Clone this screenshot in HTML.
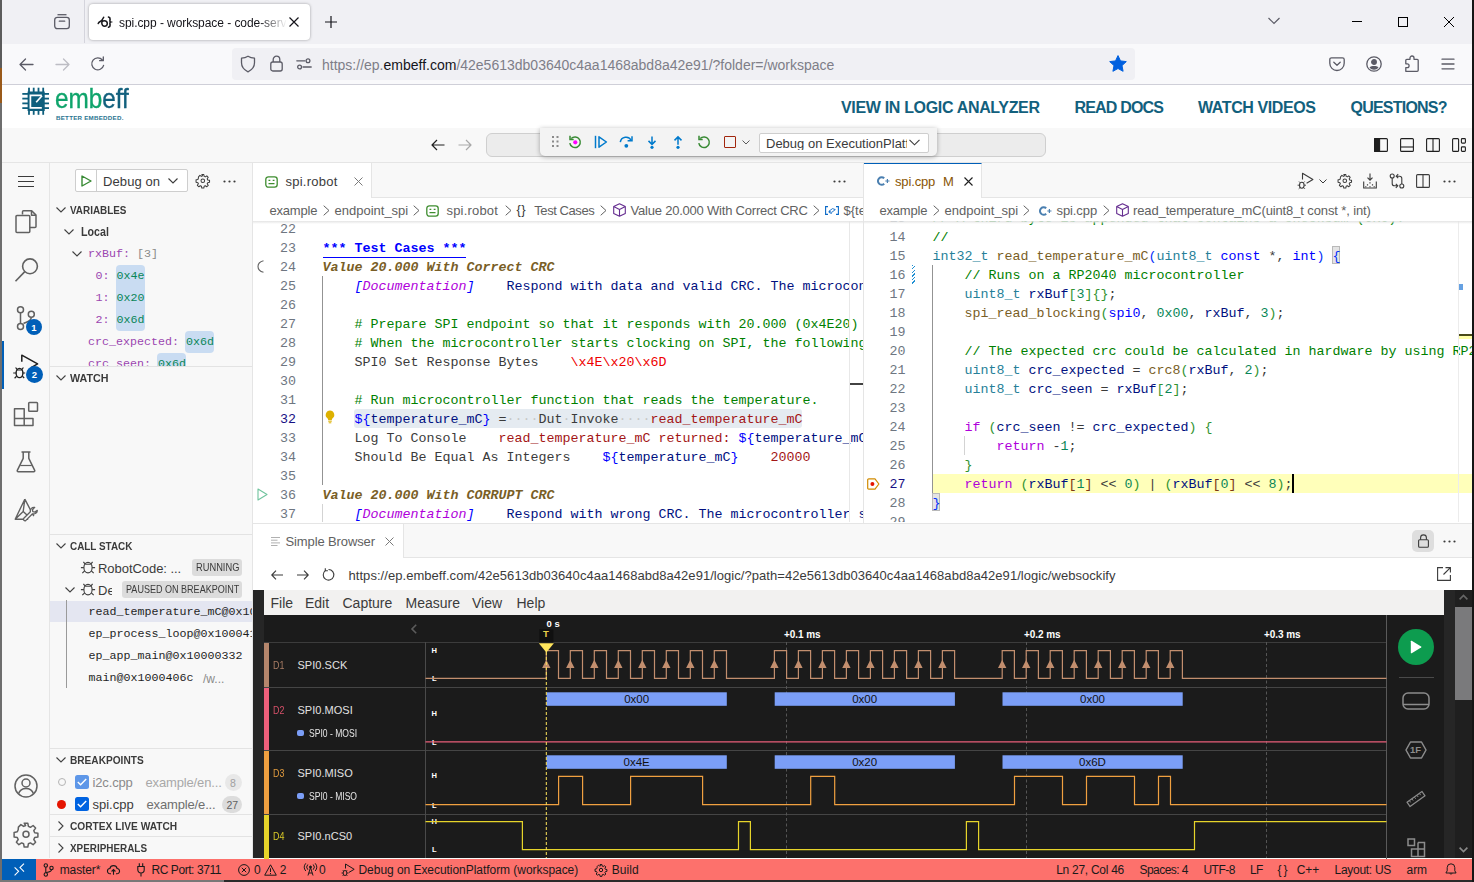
<!DOCTYPE html>
<html><head><meta charset="utf-8">
<style>
*{box-sizing:border-box;margin:0;padding:0}
html,body{width:1474px;height:882px;overflow:hidden;background:#f8f8f8;font-family:"Liberation Sans",sans-serif;font-size:13px;color:#3b3b3b}
.abs{position:absolute}
#root{position:relative;width:1474px;height:882px;overflow:hidden}
svg{display:block;overflow:visible}
.t{position:absolute;white-space:nowrap;line-height:1}
/* firefox */
#fx-tabs{left:0;top:0;width:1474px;height:44px;background:#f0f0f4}
#fx-nav{left:0;top:44px;width:1474px;height:41px;background:#f9f9fb;border-bottom:1px solid #cfcfd8}
#fx-tab{left:89px;top:4px;width:221px;height:36px;background:#fff;border-radius:4px;box-shadow:0 0 3px rgba(0,0,0,.35)}
#fx-url{left:232px;top:48px;width:903px;height:32px;background:#f0f0f4;border-radius:4px}
/* embeff header */
#hdr{left:0;top:85px;width:1474px;height:43px;background:#fff}
.hl{position:absolute;top:99.500px;font-weight:bold;font-size:16px;color:#12607d;white-space:nowrap;line-height:1;letter-spacing:-0.2px}
/* vscode */
#vs-title{left:0;top:128px;width:1474px;height:35px;background:#f8f8f8;border-bottom:1px solid #e5e5e5}
#act{left:0;top:163px;width:50px;height:695px;background:#f8f8f8;border-right:1px solid #e5e5e5}
#side{left:50px;top:163px;width:203px;height:695px;background:#f8f8f8;border-right:1px solid #e5e5e5}
#ed1{left:253px;top:163px;width:610px;height:360px;background:#fff;overflow:hidden}
#ed2{left:863px;top:163px;width:611px;height:360px;background:#fff;overflow:hidden;border-left:1px solid #e5e5e5}
#ed3{left:253px;top:523px;width:1221px;height:335px;background:#fff;overflow:hidden;border-top:1px solid #e5e5e5}
#status{left:0;top:859px;width:1472px;height:21px;background:#fd716c;color:#111;font-size:12px}
.tabbar{position:absolute;left:0;top:0;width:100%;height:35px;background:#f8f8f8;border-bottom:1px solid #e5e5e5}
.code{position:absolute;font-family:"Liberation Mono",monospace;font-size:13.33px;line-height:19px;white-space:pre;color:#3b3b3b}
.ln{position:absolute;font-family:"Liberation Mono",monospace;font-size:13.33px;line-height:19px;white-space:pre;color:#6e7681;text-align:right}

.sh{position:absolute;left:70px;font-weight:bold;font-size:11px;color:#3b3b3b;white-space:nowrap;line-height:1;transform-origin:0 50%;transform:scaleX(.9)}
.chev{position:absolute}
.sm{position:absolute;font-family:"Liberation Mono",monospace;font-size:11.670px;white-space:pre;line-height:1;color:#1f1f1f}
.hb{position:absolute;background:#c9dcf2;border-radius:4px}
.sep{position:absolute;left:50px;width:202px;height:1px;background:#e3e3e3}
.bdg{position:absolute;background:#dcdcdc;border-radius:3px;font-size:10.500px;color:#3b3b3b;line-height:1;white-space:nowrap}
</style></head><body><div id="root">

<!-- FIREFOX TABS -->
<div id="fx-tabs" class="abs"></div>
<div class="abs" style="left:84px;top:0;width:1px;height:43px;background:#d4d4dc"></div>
<div id="fx-tab" class="abs"></div>
<!-- firefox view icon -->
<svg class="abs" style="left:53px;top:13px" width="18" height="18" viewBox="0 0 18 18" fill="none" stroke="#5b5b66" stroke-width="1.3"><path d="M4.5 1.7h9"/><rect x="1.7" y="4.3" width="14.6" height="11.4" rx="2.6"/><path d="M6.3 8.2h5.4" stroke-linecap="round"/></svg>
<!-- favicon -->
<svg class="abs" style="left:97px;top:16px" width="16" height="12" viewBox="0 0 16 12" fill="none" stroke="#1a1a1e" stroke-width="1.500" stroke-linecap="round"><path d="M1.200 7.600C2 5.400 3.600 5.800 4.600 4.600"/><path d="M6.700 1.200C5.200 2.800 4.600 5 4.800 7.200c.2 1.900 1.300 3 2.800 3 1.600 0 2.700-1 2.700-2.600 0-1.700-1.300-2.800-3-2.800-.9 0-1.700.4-2.300 1"/><path d="M11.500 1c1.200.3 1.700 1 1.600 2.200l-.2 1.400c-.1.800.1 1.300.7 1.500-.6.200-.8.700-.7 1.500l.2 1.400c.1 1.200-.4 1.900-1.600 2.200" stroke-width="1.600"/></svg>
<div class="t" style="left:119px;top:17.300px;font-size:12px;letter-spacing:-.06px;color:#15141a;width:168px;overflow:hidden;-webkit-mask-image:linear-gradient(90deg,#000 84%,transparent 100%)">spi.cpp - workspace - code-server</div>
<svg class="abs" style="left:289px;top:17px" width="10" height="10" viewBox="0 0 10 10" stroke="#15141a" stroke-width="1.2"><path d="M.5.5l9 9M9.500.5l-9 9"/></svg>
<svg class="abs" style="left:325px;top:16px" width="12" height="12" viewBox="0 0 12 12" stroke="#15141a" stroke-width="1.2"><path d="M6 0v12M0 6h12"/></svg>
<!-- window controls -->
<svg class="abs" style="left:1268px;top:17px" width="12" height="8" viewBox="0 0 12 8" fill="none" stroke="#5b5b66" stroke-width="1.200"><path d="M.5 1l5.500 5.500L11.500 1"/></svg>
<div class="abs" style="left:1352px;top:21px;width:10px;height:1px;background:#000"></div>
<div class="abs" style="left:1398px;top:17px;width:10px;height:10px;border:1px solid #000"></div>
<svg class="abs" style="left:1444px;top:17px" width="10" height="10" viewBox="0 0 10 10" stroke="#000" stroke-width="1"><path d="M0 0l10 10M10 0L0 10"/></svg>
<!-- FIREFOX NAV -->
<div id="fx-nav" class="abs"></div>
<div id="fx-url" class="abs"></div>
<svg class="abs" style="left:19px;top:58px" width="15" height="13" viewBox="0 0 15 13" fill="none" stroke="#5b5b66" stroke-width="1.300" stroke-linecap="round" stroke-linejoin="round"><path d="M14 6.500H1M6.500 1 1 6.500 6.500 12"/></svg>
<svg class="abs" style="left:55px;top:58px" width="15" height="13" viewBox="0 0 15 13" fill="none" stroke="#bdbdc4" stroke-width="1.300" stroke-linecap="round" stroke-linejoin="round"><path d="M1 6.500h13M8.500 1 14 6.500 8.500 12"/></svg>
<svg class="abs" style="left:90px;top:56px" width="16" height="16" viewBox="0 0 16 16" fill="none" stroke="#5b5b66" stroke-width="1.300" stroke-linecap="round" stroke-linejoin="round"><path d="M13.600 9.300A6 6 0 1 1 12.400 4"/><path d="M13.300 1v3.700H9.600"/></svg>
<svg class="abs" style="left:240px;top:55px" width="16" height="18" viewBox="0 0 16 18" fill="none" stroke="#5b5b66" stroke-width="1.300" stroke-linejoin="round"><path d="M8 1.200c-2 1.300-4.200 1.900-6.500 2v4.600c0 4.300 2.800 7.200 6.500 9 3.700-1.800 6.500-4.700 6.500-9V3.200c-2.300-.1-4.500-.7-6.500-2z"/></svg>
<svg class="abs" style="left:270px;top:55px" width="13" height="17" viewBox="0 0 13 17" fill="none" stroke="#5b5b66" stroke-width="1.300"><rect x=".8" y="7" width="11.400" height="9" rx="2"/><path d="M3.200 7V4.500a3.300 3.300 0 0 1 6.600 0V7"/></svg>
<svg class="abs" style="left:296px;top:58px" width="16" height="12" viewBox="0 0 16 12" fill="none" stroke="#5b5b66" stroke-width="1.300" stroke-linecap="round"><circle cx="12" cy="2.800" r="1.900"/><path d="M.8 2.800h8"/><circle cx="3.600" cy="9" r="1.900"/><path d="M7 9h8.200"/></svg>
<div class="t" style="left:322px;top:58px;font-size:14px;color:#7e7e88">https://ep.<span style="color:#15141a">embeff.com</span>/42e5613db03640c4aa1468abd8a42e91/?folder=/workspace</div>
<svg class="abs" style="left:1109px;top:55px" width="18" height="17" viewBox="0 0 18 17" fill="#0060df"><path d="M9 .6l2.500 5.300 5.800.7-4.300 4 1.100 5.700L9 13.500l-5.100 2.800L5 10.600.7 6.600l5.800-.7z" stroke="#0060df" stroke-width="1" stroke-linejoin="round"/></svg>
<svg class="abs" style="left:1329px;top:57px" width="16" height="14" viewBox="0 0 16 14" fill="none" stroke="#5b5b66" stroke-width="1.300" stroke-linecap="round" stroke-linejoin="round"><path d="M2.500.8h11a1.700 1.700 0 0 1 1.700 1.700v3.800a7.200 7.200 0 0 1-14.400 0V2.500A1.700 1.700 0 0 1 2.500.8z"/><path d="M4.800 5.200 8 8.200l3.200-3"/></svg>
<svg class="abs" style="left:1366px;top:56px" width="16" height="16" viewBox="0 0 16 16" fill="none" stroke="#5b5b66" stroke-width="1.300"><circle cx="8" cy="8" r="7.200"/><circle cx="8" cy="6" r="2.300" fill="#5b5b66"/><path d="M3.500 11.200c1.200 1.800 2.800 2.500 4.500 2.500s3.300-.7 4.500-2.500c-1-.9-2.600-1.300-4.500-1.300s-3.500.4-4.500 1.300z" fill="#5b5b66" stroke="none"/></svg>
<svg class="abs" style="left:1404px;top:55px" width="16" height="17" viewBox="0 0 16 17" fill="none" stroke="#5b5b66" stroke-width="1.300" stroke-linejoin="round"><path d="M6 4.300V3a2 2 0 0 1 4 0v1.300h3.200a1 1 0 0 1 1 1v10a1 1 0 0 1-1 1H1.800V12.600h1.400a1.900 1.900 0 0 0 0-3.800H1.800V5.300a1 1 0 0 1 1-1z"/></svg>
<svg class="abs" style="left:1441px;top:58px" width="14" height="12" viewBox="0 0 14 12" stroke="#5b5b66" stroke-width="1.300" stroke-linecap="round"><path d="M1 1.200h12M1 6h12M1 10.800h12"/></svg>
<!-- EMBEFF HEADER -->
<div id="hdr" class="abs"></div>
<svg class="abs" style="left:22px;top:87px" width="28" height="28" viewBox="0 0 28 28"><g fill="#0f5f7d"><rect x="5.600" y="4.500" width="17.100" height="19.500"/><rect x="6.100" y=".7" width="1.800" height="27.100"/><rect x="10.800" y=".7" width="1.800" height="27.100"/><rect x="15.600" y=".7" width="1.800" height="27.100"/><rect x="20.300" y=".7" width="1.800" height="27.100"/><rect x=".3" y="6" width="26.700" height="1.800"/><rect x=".3" y="10.700" width="26.700" height="1.800"/><rect x=".3" y="15.500" width="26.700" height="1.800"/><rect x=".3" y="20.200" width="26.700" height="1.800"/></g><path d="M19.800 8.400H8.400v12.400h11.400" fill="none" stroke="#fff" stroke-width="1.700"/><path d="M20 8.800l-5.800 6.400" stroke="#fff" stroke-width="1.700"/></svg>
<div id="logo-t" class="t" style="left:54.500px;top:86px;font-size:27px;color:#12607d;-webkit-text-stroke:.35px currentColor;transform-origin:0 0;transform:scaleX(.9);letter-spacing:0px"><span style="color:#0fa46b">emb</span>eff</div>
<div id="logo-s" class="t" style="left:56px;top:115.300px;font-size:6.200px;font-weight:bold;color:#2b7591;letter-spacing:.25px">BETTER EMBEDDED.</div>
<div id="h1" class="hl" style="left:841px;letter-spacing:-.33px">VIEW IN LOGIC ANALYZER</div>
<div id="h2" class="hl" style="left:1074.500px;letter-spacing:-.81px">READ DOCS</div>
<div id="h3" class="hl" style="left:1198px;letter-spacing:-.41px">WATCH VIDEOS</div>
<div id="h4" class="hl" style="left:1350.500px;letter-spacing:-.78px">QUESTIONS?</div>
<!-- VSCODE TITLE -->
<div id="vs-title" class="abs"></div>
<svg class="abs" style="left:431px;top:139px" width="14" height="12" viewBox="0 0 14 12" fill="none" stroke="#1f1f1f" stroke-width="1.200" stroke-linejoin="round"><path d="M13.500 6H1M6 1 1 6l5 5"/></svg>
<svg class="abs" style="left:458px;top:139px" width="14" height="12" viewBox="0 0 14 12" fill="none" stroke="#a8a8a8" stroke-width="1.200" stroke-linejoin="round"><path d="M.5 6H13M8 1l5 5-5 5"/></svg>
<div class="abs" style="left:486px;top:133px;width:560px;height:24px;background:#ececec;border:1px solid #cfcfcf;border-radius:6px"></div>
<!-- debug toolbar -->
<div class="abs" style="left:540px;top:128px;width:397px;height:28px;background:#f3f3f3;border-radius:0 0 5px 5px;box-shadow:0 1px 5px rgba(0,0,0,.32)"></div>
<svg class="abs" style="left:552px;top:136px" width="7" height="12" viewBox="0 0 7 12" fill="#8a8a8a"><rect x="0" y="0" width="2" height="2"/><rect x="4.500" y="0" width="2" height="2"/><rect x="0" y="4.500" width="2" height="2"/><rect x="4.500" y="4.500" width="2" height="2"/><rect x="0" y="9" width="2" height="2"/><rect x="4.500" y="9" width="2" height="2"/></svg>
<svg class="abs" style="left:568px;top:135px" width="14" height="14" viewBox="0 0 14 14" fill="none" stroke="#388a34" stroke-width="1.500"><path d="M3.200 3.600A5.300 5.300 0 1 1 1.800 8.200"/><path d="M2 .8v3.600h3.700" stroke-linejoin="miter"/><circle cx="7.300" cy="7.300" r="2.100" fill="#f0f" stroke="none"/></svg>
<svg class="abs" style="left:594px;top:135px" width="14" height="14" viewBox="0 0 14 14" fill="none" stroke="#007acc" stroke-width="1.500"><path d="M1.500 .8v12.400"/><path d="M5 1.800v10.400L12.400 7z" stroke-linejoin="round"/></svg>
<svg class="abs" style="left:619px;top:135px" width="15" height="14" viewBox="0 0 15 14" fill="none" stroke="#007acc" stroke-width="1.500"><path d="M1.300 7.200a5.800 5.800 0 0 1 11-1.700"/><path d="M13 1.300v4.500H8.600"/><circle cx="7.300" cy="10.800" r="1.900" fill="#007acc" stroke="none"/></svg>
<svg class="abs" style="left:647px;top:135.500px" width="10" height="13.400" viewBox="0 0 12 16" fill="none" stroke="#007acc" stroke-width="1.800"><path d="M6 .5v9.300M1.800 5.800 6 10l4.200-4.200"/><circle cx="6" cy="13.600" r="1.900" fill="#007acc" stroke="none"/></svg>
<svg class="abs" style="left:673px;top:135.500px" width="10" height="13.400" viewBox="0 0 12 16" fill="none" stroke="#007acc" stroke-width="1.800"><path d="M6 10.500V1.200M1.800 5.200 6 1l4.200 4.200"/><circle cx="6" cy="13.600" r="1.900" fill="#007acc" stroke="none"/></svg>
<svg class="abs" style="left:697px;top:135px" width="14" height="14" viewBox="0 0 14 14" fill="none" stroke="#388a34" stroke-width="1.500"><path d="M3.200 3.600A5.300 5.300 0 1 1 1.800 8.200"/><path d="M2 .8v3.600h3.700"/></svg>
<div class="abs" style="left:724px;top:136px;width:12px;height:12px;border:1.500px solid #a1260d;border-radius:1px"></div>
<svg class="abs" style="left:742px;top:140px" width="8" height="5" viewBox="0 0 8 5" fill="none" stroke="#5a5a5a" stroke-width="1"><path d="M.5.5 4 4 7.500.5"/></svg>
<div class="abs" style="left:759px;top:133px;width:170px;height:20px;background:#fff;border:1px solid #cecece;border-radius:2px"></div>
<div id="dbgsel" class="t" style="left:766px;top:136.500px;font-size:13px;color:#3b3b3b;width:141px;overflow:hidden;letter-spacing:0px">Debug on ExecutionPlatform (workspace)</div>
<svg class="abs" style="left:909px;top:139px" width="11" height="7" viewBox="0 0 11 7" fill="none" stroke="#3b3b3b" stroke-width="1.100"><path d="M.5.800 5.500 5.800 10.500.8"/></svg>
<!-- layout icons -->
<svg class="abs" style="left:1374px;top:138px" width="14" height="14" viewBox="0 0 14 14" fill="none" stroke="#1f1f1f" stroke-width="1.100"><rect x=".6" y=".6" width="12.800" height="12.800" rx="1"/><rect x=".6" y=".6" width="5" height="12.800" fill="#1f1f1f"/></svg>
<svg class="abs" style="left:1400px;top:138px" width="14" height="14" viewBox="0 0 14 14" fill="none" stroke="#1f1f1f" stroke-width="1.100"><rect x=".6" y=".6" width="12.800" height="12.800" rx="1"/><path d="M.6 9h12.800"/></svg>
<svg class="abs" style="left:1426px;top:138px" width="14" height="14" viewBox="0 0 14 14" fill="none" stroke="#1f1f1f" stroke-width="1.100"><rect x=".6" y=".6" width="12.800" height="12.800" rx="1"/><path d="M7 .6v12.800"/></svg>
<svg class="abs" style="left:1452px;top:138px" width="14" height="14" viewBox="0 0 14 14" fill="none" stroke="#1f1f1f" stroke-width="1.100"><rect x=".6" y=".6" width="6" height="12.800" rx="1"/><rect x="9.400" y=".6" width="4" height="4.500" rx=".8"/><rect x="9.400" y="8.900" width="4" height="4.500" rx=".8"/></svg>
<!-- ACTIVITY BAR -->
<div id="act" class="abs"></div>
<div class="abs" style="left:2px;top:341px;width:2px;height:48px;background:#005fb8"></div>
<svg class="abs" style="left:18px;top:176px" width="16" height="11" viewBox="0 0 16 11" stroke="#3b3b3b" stroke-width="1"><path d="M0 .5h16M0 5.500h16M0 10.500h16"/></svg>
<!-- files -->
<svg class="abs" style="left:14px;top:209px" width="24" height="26" viewBox="0 0 24 26" fill="none" stroke="#616161" stroke-width="1.500" stroke-linejoin="round"><path d="M8.500 5.500V2.800a1 1 0 0 1 1-1h8.200l4.300 4.300v11.400a1 1 0 0 1-1 1h-5.200"/><path d="M17.500 2v4.300H22"/><path d="M15.800 8.300v14.200a1 1 0 0 1-1 1H3a1 1 0 0 1-1-1V7.500a1 1 0 0 1 1-1h11.800a1 1 0 0 1 1 1z"/></svg>
<!-- search -->
<svg class="abs" style="left:14px;top:257px" width="25" height="26" viewBox="0 0 25 26" fill="none" stroke="#616161" stroke-width="1.600"><circle cx="16" cy="9.300" r="7.400"/><path d="M10.800 14.600 1.500 24.300"/></svg>
<!-- scm -->
<svg class="abs" style="left:15px;top:305px" width="22" height="27" viewBox="0 0 22 27" fill="none" stroke="#616161" stroke-width="1.500"><circle cx="5.500" cy="4.800" r="3"/><circle cx="5.500" cy="21.500" r="3"/><circle cx="16.300" cy="9.300" r="3"/><path d="M5.500 7.800v10.700"/><path d="M16.300 12.300c0 4-4 4.500-7.800 6.200"/></svg>
<div class="abs" style="left:25.500px;top:318.500px;width:16.500px;height:16.500px;border-radius:9px;background:#005fb8"></div>
<div class="t" style="left:31.300px;top:322.500px;font-size:9.500px;font-weight:bold;color:#fff">1</div>
<!-- debug -->
<svg class="abs" style="left:12px;top:353px" width="28" height="28" viewBox="0 0 28 28" fill="none" stroke="#1f1f1f" stroke-width="1.500" stroke-linejoin="round"><path d="M9.800 8.800V2.200l15.800 8.600-6.500 3.800"/><ellipse cx="7.500" cy="20" rx="3.400" ry="4.600" stroke-width="1.400"/><path d="M5 16.300 3.600 14.500M10 16.300l1.400-1.800M4.100 20H1.200M10.900 20h2.300M4.600 23.300l-2 1.900M10.400 23.300l1.800 1.700M5 17h5" stroke-width="1.200"/></svg>
<div class="abs" style="left:26.300px;top:366.300px;width:16.500px;height:16.500px;border-radius:9px;background:#005fb8"></div>
<div class="t" style="left:31.800px;top:370.300px;font-size:9.500px;font-weight:bold;color:#fff">2</div>
<!-- extensions -->
<svg class="abs" style="left:13px;top:401px" width="26" height="26" viewBox="0 0 26 26" fill="none" stroke="#616161" stroke-width="1.500" stroke-linejoin="round"><path d="M1.500 7.800h9.700v9.600H1.500zM11.200 17.400h8.800v7.200h-8.800zM1.500 17.400v7.200h9.700"/><rect x="15.700" y="1.500" width="8.800" height="8.800" rx=".8"/></svg>
<!-- flask -->
<svg class="abs" style="left:16px;top:451px" width="20" height="22" viewBox="0 0 20 22" fill="none" stroke="#616161" stroke-width="1.500" stroke-linejoin="round"><path d="M5.500 1h9"/><path d="M7.200 1v6.300L1.300 19.400a1 1 0 0 0 .9 1.400h15.600a1 1 0 0 0 .9-1.400L12.800 7.300V1"/><path d="M4.200 14.500h11.600" stroke-width="1.200"/></svg>
<!-- cmake -->
<svg class="abs" style="left:14px;top:498px" width="25" height="25" viewBox="0 0 25 25" fill="none" stroke="#616161" stroke-width="1.400" stroke-linejoin="round"><path d="M10.800 1.200 1.200 21.200h13M10.800 1.200l9 17M10.800 1.200l-1.600 12.300 4.600 4.200M1.200 21.200l8-7.700"/><path d="M23.300 12.400a3.600 3.600 0 0 1-4.800 3.400l-6.600 6.600a1.500 1.500 0 0 1-2.100-2.100l6.600-6.600a3.600 3.600 0 0 1 4.300-4.300l-2.300 2.300.4 2 2 .4z" stroke-width="1.300" fill="#f8f8f8"/></svg>
<!-- account -->
<svg class="abs" style="left:14px;top:774px" width="24" height="24" viewBox="0 0 24 24" fill="none" stroke="#616161" stroke-width="1.500"><circle cx="12" cy="12" r="11"/><circle cx="12" cy="9" r="4"/><path d="M4.500 19.800c1.200-3.600 4-5.300 7.500-5.300s6.300 1.700 7.500 5.300"/></svg>
<!-- gear -->
<svg class="abs" style="left:14px;top:822px" width="24" height="24" viewBox="0 0 24 24" fill="none" stroke="#616161" stroke-width="1.500" stroke-linejoin="round"><path d="M10.200 1h3.600l.6 3.200 2 .9 2.700-1.800 2.500 2.500-1.800 2.700.9 2 3.200.6v3.600l-3.200.6-.9 2 1.800 2.700-2.500 2.500-2.700-1.800-2 .9-.6 3.200h-3.600l-.6-3.200-2-.9-2.700 1.800-2.500-2.500 1.800-2.700-.9-2-3.200-.6V10.200l3.200-.6.900-2L4.400 4.900l2.500-2.500 2.700 1.800 2-.9z" transform="translate(0 .2)"/><circle cx="12" cy="12.200" r="3"/></svg>
<!-- SIDEBAR -->
<div id="side" class="abs"></div>
<div class="abs" style="left:75px;top:169px;width:113px;height:23px;background:#fff;border:1px solid #cecece;border-radius:2px"></div>
<div class="abs" style="left:96px;top:170px;width:1px;height:21px;background:#cecece"></div>
<svg class="abs" style="left:81px;top:175px" width="11" height="12" viewBox="0 0 11 12" fill="none" stroke="#388a34" stroke-width="1.400" stroke-linejoin="round"><path d="M1 1v10l9-5z"/></svg>
<div id="dbgon" class="t" style="left:103px;top:174.500px;font-size:13px;color:#3b3b3b;letter-spacing:.1px">Debug on</div>
<svg class="abs" style="left:168px;top:178px" width="10" height="6" viewBox="0 0 10 6" fill="none" stroke="#3b3b3b" stroke-width="1.100"><path d="M.5.5 5 5 9.500.5"/></svg>
<svg class="abs" style="left:195.800px;top:174.300px" width="13.600" height="13.600" viewBox="0 0 24 24" fill="none" stroke="#3b3b3b" stroke-width="1.800" stroke-linejoin="round"><path d="M10.200 1h3.600l.6 3.200 2 .9 2.700-1.800 2.500 2.500-1.800 2.700.9 2 3.200.6v3.600l-3.200.6-.9 2 1.800 2.700-2.500 2.500-2.700-1.800-2 .9-.6 3.200h-3.600l-.6-3.200-2-.9-2.700 1.800-2.500-2.500 1.800-2.700-.9-2-3.200-.6V10.200l3.200-.6.900-2L4.400 4.900l2.500-2.500 2.700 1.800 2-.9z"/><circle cx="12" cy="12" r="3.200"/></svg>
<svg class="abs" style="left:223px;top:180px" width="13" height="3" viewBox="0 0 13 3" fill="#3b3b3b"><circle cx="1.500" cy="1.500" r="1.100"/><circle cx="6.500" cy="1.500" r="1.100"/><circle cx="11.500" cy="1.500" r="1.100"/></svg>
<svg class="chev" style="left:55.5px;top:206.5px" width="10" height="6" viewBox="0 0 10 6" fill="none" stroke="#424242" stroke-width="1.100"><path d="M.5.5 5 5 9.500.5"/></svg>
<div id="sh-var" class="sh" style="top:204.500px">VARIABLES</div>
<svg class="chev" style="left:64px;top:229px" width="10" height="6" viewBox="0 0 10 6" fill="none" stroke="#424242" stroke-width="1.100"><path d="M.5.5 5 5 9.500.5"/></svg>
<div id="local" class="t" style="left:80.500px;top:224.800px;font-size:13px;font-weight:bold;color:#3b3b3b;transform-origin:0 50%;transform:scaleX(.82)">Local</div>
<svg class="chev" style="left:72px;top:251px" width="10" height="6" viewBox="0 0 10 6" fill="none" stroke="#424242" stroke-width="1.100"><path d="M.5.5 5 5 9.500.5"/></svg>
<div class="hb" style="left:115.500px;top:264.500px;width:29px;height:66px"></div>
<div class="hb" style="left:184.500px;top:330.500px;width:29px;height:22px"></div>
<div class="hb" style="left:156.500px;top:352.500px;width:29px;height:14px;border-radius:4px 4px 0 0"></div>
<div class="sm" style="left:88px;top:249.1px"><span style="color:#9b46b0">rxBuf:</span> <span style="color:#8a8a8a">[3]</span></div>
<div class="sm" style="left:95.500px;top:271.1px"><span style="color:#9b46b0">0:</span> <span style="color:#098658">0x4e</span></div>
<div class="sm" style="left:95.500px;top:293.1px"><span style="color:#9b46b0">1:</span> <span style="color:#098658">0x20</span></div>
<div class="sm" style="left:95.500px;top:315.1px"><span style="color:#9b46b0">2:</span> <span style="color:#098658">0x6d</span></div>
<div id="crcexp" class="sm" style="left:88px;top:337.1px"><span style="color:#9b46b0">crc_expected:</span> <span style="color:#098658">0x6d</span></div>
<div class="abs" style="left:50px;top:352px;width:202px;height:14px;overflow:hidden"><div class="sm" style="left:38px;top:6.500px"><span style="color:#9b46b0">crc_seen:</span> <span style="color:#098658">0x6d</span></div></div>
<div class="sep" style="top:366px"></div>
<svg class="chev" style="left:55.5px;top:374.5px" width="10" height="6" viewBox="0 0 10 6" fill="none" stroke="#424242" stroke-width="1.100"><path d="M.5.5 5 5 9.500.5"/></svg>
<div class="sh" style="top:372.800px;transform:scaleX(.975)">WATCH</div>
<div class="sep" style="top:534px"></div>
<svg class="chev" style="left:55.5px;top:543px" width="10" height="6" viewBox="0 0 10 6" fill="none" stroke="#424242" stroke-width="1.100"><path d="M.5.5 5 5 9.500.5"/></svg>
<div id="sh-cs" class="sh" style="top:540.500px">CALL STACK</div>
<svg class="abs" style="left:80px;top:558.500px" width="16" height="16" viewBox="0 0 14 14" fill="none" stroke="#424242" stroke-width="1"><ellipse cx="7" cy="7.500" rx="3.600" ry="4.600"/><path d="M4.300 4.300 3 2.500M9.700 4.300 11 2.500M3.400 7.500H.8M10.600 7.500h2.600M4 10.500l-2 1.800M10 10.500l2 1.800M4.500 4.600h5"/></svg>
<div id="robot" class="t" style="left:98px;top:561.800px;font-size:13px;color:#3b3b3b;letter-spacing:-.05px">RobotCode: ...</div>
<div class="bdg" style="left:192px;top:558.500px;width:50px;height:17.500px"></div><div id="b1" class="t" style="left:195.500px;top:562.500px;font-size:10.200px;color:#3b3b3b;transform-origin:0 50%;transform:scaleX(0.912)">RUNNING</div>
<svg class="chev" style="left:64.5px;top:586.5px" width="10" height="6" viewBox="0 0 10 6" fill="none" stroke="#424242" stroke-width="1.100"><path d="M.5.5 5 5 9.500.5"/></svg><svg class="abs" style="left:80px;top:580.500px" width="16" height="16" viewBox="0 0 14 14" fill="none" stroke="#424242" stroke-width="1"><ellipse cx="7" cy="7.500" rx="3.600" ry="4.600"/><path d="M4.300 4.300 3 2.500M9.700 4.300 11 2.500M3.400 7.500H.8M10.600 7.500h2.600M4 10.500l-2 1.800M10 10.500l2 1.800M4.500 4.600h5"/></svg>
<div class="abs" style="left:98px;top:580px;width:14px;height:18px;overflow:hidden"><div class="t" style="left:0;top:3.800px;font-size:13px;color:#3b3b3b">Debug</div></div>
<div class="bdg" style="left:122px;top:580.500px;width:120px;height:17.500px"></div><div id="b2" class="t" style="left:125.500px;top:584.500px;font-size:10.200px;color:#3b3b3b;transform-origin:0 50%;transform:scaleX(0.887)">PAUSED ON BREAKPOINT</div>
<div class="abs" style="left:50px;top:600.500px;width:202px;height:21px;background:#e4e6f1"></div>
<div class="abs" style="left:66px;top:600px;width:1px;height:88px;background:#9a9a9a"></div>
<div class="abs" style="left:50px;top:600px;width:202px;height:90px;overflow:hidden">
<div class="sm" style="left:38.500px;top:7.300px">read_temperature_mC@0x10004a00</div>
<div class="sm" style="left:38.500px;top:29.300px">ep_process_loop@0x10004100</div>
<div id="epapp" class="sm" style="left:38.500px;top:51.300px">ep_app_main@0x10000332</div>
<div class="sm" style="left:38.500px;top:73.300px">main@0x1000406c</div>
<div class="t" style="left:153px;top:73px;font-size:12px;color:#8a8a8a">/w...</div>
</div>
<div class="sep" style="top:748px"></div>
<svg class="chev" style="left:55.5px;top:757px" width="10" height="6" viewBox="0 0 10 6" fill="none" stroke="#424242" stroke-width="1.100"><path d="M.5.5 5 5 9.500.5"/></svg>
<div id="sh-bp" class="sh" style="top:754.500px;transform:scaleX(.92)">BREAKPOINTS</div>
<div class="abs" style="left:57.500px;top:778px;width:8px;height:8px;border-radius:4px;border:1.300px solid #b4b4b4"></div>
<div class="abs" style="left:75px;top:774.500px;width:14px;height:14px;border-radius:2.500px;background:#5e97e8"></div>
<svg class="abs" style="left:77px;top:777.500px" width="10" height="8" viewBox="0 0 10 8" fill="none" stroke="#fff" stroke-width="1.400"><path d="M.8 4 3.600 6.800 9.200 1"/></svg>
<div id="i2c" class="t" style="left:92.500px;top:775.500px;font-size:13px;color:#8a8a8a;letter-spacing:-.15px">i2c.cpp</div>
<div id="i2cp" class="t" style="left:145.500px;top:776px;font-size:13px;color:#a8a8a8;letter-spacing:-.15px">example/en...</div>
<div class="abs" style="left:224.500px;top:774px;width:17px;height:17px;border-radius:9px;background:#e8e8e8"></div>
<div class="t" style="left:230px;top:777.500px;font-size:10.500px;color:#a0a0a0">8</div>
<div class="abs" style="left:57.200px;top:800.200px;width:8.600px;height:8.600px;border-radius:5px;background:#e51400"></div>
<div class="abs" style="left:75px;top:796.500px;width:14px;height:14px;border-radius:2.500px;background:#0063e1"></div>
<svg class="abs" style="left:77px;top:799.500px" width="10" height="8" viewBox="0 0 10 8" fill="none" stroke="#fff" stroke-width="1.400"><path d="M.8 4 3.600 6.800 9.200 1"/></svg>
<div id="spi" class="t" style="left:92.500px;top:797.500px;font-size:13px;color:#3b3b3b;letter-spacing:0px">spi.cpp</div>
<div id="spip" class="t" style="left:146.500px;top:798px;font-size:13px;color:#6f6f6f;letter-spacing:-.15px">example/e...</div>
<div class="abs" style="left:222px;top:796px;width:20px;height:17px;border-radius:9px;background:#dcdcdc"></div>
<div class="t" style="left:226.500px;top:799.500px;font-size:10.500px;color:#616161">27</div>
<div class="sep" style="top:814px"></div>
<svg class="chev" style="left:57.5px;top:821px" width="6" height="10" viewBox="0 0 6 10" fill="none" stroke="#424242" stroke-width="1.100"><path d="M.5.5 5 5 .5 9.500"/></svg>
<div id="sh-cl" class="sh" style="top:820.500px;transform:scaleX(.925)">CORTEX LIVE WATCH</div>
<div class="sep" style="top:836px"></div>
<svg class="chev" style="left:57.5px;top:843px" width="6" height="10" viewBox="0 0 6 10" fill="none" stroke="#424242" stroke-width="1.100"><path d="M.5.5 5 5 .5 9.500"/></svg>
<div id="sh-xp" class="sh" style="top:842.500px">XPERIPHERALS</div>
<!-- EDITOR 1 -->
<div id="ed1" class="abs">
<div class="abs" style="left:0;top:58px;width:610px;height:301px;overflow:hidden">
<div class="abs" style="left:101px;top:188px;width:448px;height:19px;background:#e5ebf1;border-radius:3px"></div>
<div class="abs" style="left:69.500px;top:36px;width:143.500px;height:1px;background:#0000ff"></div>
<div class="abs" style="left:69px;top:55px;width:1px;height:209px;background:#939393"></div>
<div class="abs" style="left:69px;top:283px;width:1px;height:19px;background:#d3d3d3"></div>
<div class="ln" style="left:0;top:-1px;width:43px;color:#6e7681">22</div>
<div class="ln" style="left:0;top:18px;width:43px;color:#6e7681">23</div>
<div class="code" style="left:69.500px;top:18px"><span style="color:#0000ff;font-weight:bold">*** Test Cases ***</span></div>
<div class="ln" style="left:0;top:37px;width:43px;color:#6e7681">24</div>
<div class="code" style="left:69.500px;top:37px"><span style="color:#795e26;font-weight:bold;font-style:italic">Value 20.000 With Correct CRC</span></div>
<div class="ln" style="left:0;top:56px;width:43px;color:#6e7681">25</div>
<div class="code" style="left:69.500px;top:56px">    <span style="color:#0000ff;font-style:italic">[</span><span style="color:#af00db;font-style:italic">Documentation</span><span style="color:#0000ff;font-style:italic">]</span>    <span style="color:#001080;">Respond with data and valid CRC. The microcontroller</span></div>
<div class="ln" style="left:0;top:75px;width:43px;color:#6e7681">26</div>
<div class="ln" style="left:0;top:94px;width:43px;color:#6e7681">27</div>
<div class="code" style="left:69.500px;top:94px">    <span style="color:#008000;"># Prepare SPI endpoint so that it responds with 20.000 (0x4E20)</span></div>
<div class="ln" style="left:0;top:113px;width:43px;color:#6e7681">28</div>
<div class="code" style="left:69.500px;top:113px">    <span style="color:#008000;"># When the microcontroller starts clocking on SPI, the following bytes</span></div>
<div class="ln" style="left:0;top:132px;width:43px;color:#6e7681">29</div>
<div class="code" style="left:69.500px;top:132px">    <span style="color:#3b3b3b;">SPI0 Set Response Bytes</span>    <span style="color:#ee0000;">\x4E\x20\x6D</span></div>
<div class="ln" style="left:0;top:151px;width:43px;color:#6e7681">30</div>
<div class="ln" style="left:0;top:170px;width:43px;color:#6e7681">31</div>
<div class="code" style="left:69.500px;top:170px">    <span style="color:#008000;"># Run microcontroller function that reads the temperature.</span></div>
<div class="ln" style="left:0;top:189px;width:43px;color:#171184">32</div>
<div class="code" style="left:69.500px;top:189px">    <span style="color:#0000ff;">${</span><span style="color:#001080;">temperature_mC</span><span style="color:#0000ff;">}</span><span style="color:#3b3b3b;"> =</span><span style="color:#c8c8c8;">····</span><span style="color:#3b3b3b;">Dut</span><span style="color:#c8c8c8;">·</span><span style="color:#3b3b3b;">Invoke</span><span style="color:#c8c8c8;">····</span><span style="color:#a31515;">read_temperature_mC</span></div>
<div class="ln" style="left:0;top:208px;width:43px;color:#6e7681">33</div>
<div class="code" style="left:69.500px;top:208px">    <span style="color:#3b3b3b;">Log To Console</span>    <span style="color:#a31515;">read_temperature_mC returned: </span><span style="color:#0000ff;">${</span><span style="color:#001080;">temperature_mC</span><span style="color:#0000ff;">}</span></div>
<div class="ln" style="left:0;top:227px;width:43px;color:#6e7681">34</div>
<div class="code" style="left:69.500px;top:227px">    <span style="color:#3b3b3b;">Should Be Equal As Integers</span>    <span style="color:#0000ff;">${</span><span style="color:#001080;">temperature_mC</span><span style="color:#0000ff;">}</span>    <span style="color:#a31515;">20000</span></div>
<div class="ln" style="left:0;top:246px;width:43px;color:#6e7681">35</div>
<div class="ln" style="left:0;top:265px;width:43px;color:#6e7681">36</div>
<div class="code" style="left:69.500px;top:265px"><span style="color:#795e26;font-weight:bold;font-style:italic">Value 20.000 With CORRUPT CRC</span></div>
<div class="ln" style="left:0;top:284px;width:43px;color:#6e7681">37</div>
<div class="code" style="left:69.500px;top:284px">    <span style="color:#0000ff;font-style:italic">[</span><span style="color:#af00db;font-style:italic">Documentation</span><span style="color:#0000ff;font-style:italic">]</span>    <span style="color:#001080;">Respond with wrong CRC. The microcontroller should</span></div>
<svg class="abs" style="left:4px;top:39px" width="8" height="13" viewBox="0 0 8 13" fill="none" stroke="#616161" stroke-width="1.100"><path d="M6.500.7C3 1.500 1 3.800 1 6.500s2 5 5.500 5.800"/></svg>
<svg class="abs" style="left:3.500px;top:267px" width="11" height="13" viewBox="0 0 11 13" fill="none" stroke="#6fc39d" stroke-width="1.100" stroke-linejoin="round"><path d="M1 1v11l9-5.500z"/></svg>
<svg class="abs" style="left:72px;top:189px" width="10" height="14" viewBox="0 0 10 14"><path d="M5 .5a4.300 4.300 0 0 0-2.600 7.700c.5.500.8 1 .8 1.700h3.600c0-.7.300-1.200.8-1.700A4.300 4.300 0 0 0 5 .5z" fill="#ddb100"/><rect x="3.200" y="10.600" width="3.600" height="1.100" fill="#ddb100"/><rect x="3.700" y="12.300" width="2.600" height="1" fill="#ddb100"/></svg>
<div class="abs" style="left:596px;top:0;width:1px;height:301px;background:#e8e8e8"></div>
<div class="abs" style="left:597px;top:162px;width:13px;height:2px;background:#424242"></div>
</div>
<div class="abs" style="left:0;top:58px;width:610px;height:3px;background:linear-gradient(#e4e4e4,rgba(255,255,255,0))"></div>
<div class="tabbar"></div>
<div class="abs" style="left:0;top:0;width:119px;height:35px;background:#fff;border-right:1px solid #e5e5e5"></div>
<svg class="abs" style="left:11.5px;top:12.5px" width="13" height="12" viewBox="0 0 13 12" fill="none" stroke="#3e8d2f" stroke-width="1.300"><rect x=".8" y=".8" width="11.400" height="10.400" rx="2.600"/><path d="M3.500 4.300h1.800M7.700 4.300h1.800M3.500 7.700h6" stroke-width="1.200"/></svg>
<div id="t1" class="t" style="left:32.500px;top:11.500px;font-size:13px;color:#3b3b3b;letter-spacing:.25px">spi.robot</div>
<svg class="abs" style="left:100.500px;top:13.500px" width="9" height="9" viewBox="0 0 9 9" stroke="#7a7a7a" stroke-width="1"><path d="M.5.5l8 8M8.500.5l-8 8"/></svg>
<svg class="abs" style="left:580px;top:17px" width="13" height="3" viewBox="0 0 13 3" fill="#3b3b3b"><circle cx="1.500" cy="1.500" r="1.100"/><circle cx="6.500" cy="1.500" r="1.100"/><circle cx="11.500" cy="1.500" r="1.100"/></svg>
<div class="abs" style="left:0;top:35px;width:610px;height:23px;overflow:hidden">
</div>
<div id="c1" class="t" style="left:16.5px;top:40.500px;font-size:13px;color:#616161;letter-spacing:-0.2px">example</div>
<svg class="abs" style="left:69.5px;top:42px" width="7" height="11" viewBox="0 0 7 11" fill="none" stroke="#616161" stroke-width="1"><path d="M.7.7 6 5.500.7 10.300"/></svg>
<div id="c2" class="t" style="left:81.5px;top:40.500px;font-size:13px;color:#616161;letter-spacing:0px">endpoint_spi</div>
<svg class="abs" style="left:160px;top:42px" width="7" height="11" viewBox="0 0 7 11" fill="none" stroke="#616161" stroke-width="1"><path d="M.7.7 6 5.500.7 10.300"/></svg>
<svg class="abs" style="left:173px;top:41.5px" width="13" height="12" viewBox="0 0 13 12" fill="none" stroke="#3e8d2f" stroke-width="1.300"><rect x=".8" y=".8" width="11.400" height="10.400" rx="2.600"/><path d="M3.500 4.300h1.800M7.700 4.300h1.800M3.500 7.700h6" stroke-width="1.200"/></svg>
<div id="c3" class="t" style="left:193.5px;top:40.500px;font-size:13px;color:#616161;letter-spacing:0.19px">spi.robot</div>
<svg class="abs" style="left:251.5px;top:42px" width="7" height="11" viewBox="0 0 7 11" fill="none" stroke="#616161" stroke-width="1"><path d="M.7.7 6 5.500.7 10.300"/></svg>
<div class="t" style="left:263.500px;top:39.500px;font-size:13px;color:#3b3b3b;letter-spacing:.5px">{}</div>
<div id="c4" class="t" style="left:281.3px;top:40.500px;font-size:13px;color:#616161;letter-spacing:-0.43px">Test Cases</div>
<svg class="abs" style="left:347.4px;top:42px" width="7" height="11" viewBox="0 0 7 11" fill="none" stroke="#616161" stroke-width="1"><path d="M.7.7 6 5.500.7 10.300"/></svg>
<svg class="abs" style="left:359.5px;top:40px" width="13" height="14" viewBox="0 0 13 14" fill="none" stroke="#652d90" stroke-width="1.100" stroke-linejoin="round"><path d="M6.500.7 12.300 3.600v6.800L6.500 13.300.7 10.400V3.600zM.7 3.600l5.800 2.900 5.800-2.900M6.500 6.500v6.800"/></svg>
<div id="c5" class="t" style="left:377.5px;top:40.500px;font-size:13px;color:#616161;letter-spacing:-0.21px">Value 20.000 With Correct CRC</div>
<svg class="abs" style="left:560.4px;top:42px" width="7" height="11" viewBox="0 0 7 11" fill="none" stroke="#616161" stroke-width="1"><path d="M.7.7 6 5.500.7 10.300"/></svg>
<svg class="abs" style="left:572px;top:43px" width="14" height="9" viewBox="0 0 14 9" fill="none" stroke="#0a69c7" stroke-width="1.100"><path d="M3 .6H.6v7.800H3M11 .6h2.400v7.800H11"/><path d="M4 5.200 7.500 2.600l2.800 1-3.600 2.800zM4 5.200v1.200l2.700 1.200" stroke-width=".9" stroke-linejoin="round"/></svg>
<div id="c6" class="t" style="left:590.5px;top:40.500px;font-size:13px;color:#616161;letter-spacing:0px">${temperature_mC}</div>
</div>
<!-- EDITOR 2 -->
<div id="ed2" class="abs">
<div class="abs" style="left:0;top:58px;width:610px;height:301px;overflow:hidden">
<div class="abs" style="left:68px;top:253px;width:542px;height:19px;background:#ffffba"></div>
<div class="abs" style="left:468px;top:25px;width:8px;height:18px;background:#e4e4e4;border:1px solid #b9b9b9"></div>
<div class="abs" style="left:68px;top:272px;width:8px;height:18px;background:#e4e4e4;border:1px solid #b9b9b9"></div>
<div class="abs" style="left:68px;top:44px;width:1px;height:228px;background:#939393"></div>
<div class="abs" style="left:100px;top:215px;width:1px;height:19px;background:#d3d3d3"></div>
<div class="ln" style="left:0;top:-12px;width:41.500px;color:#6e7681">13</div>
<div class="code" style="left:68.500px;top:-12px"><span style="color:#008000;">// A third byte is appended that contains a checksum (CRC).</span></div>
<div class="ln" style="left:0;top:7px;width:41.500px;color:#6e7681">14</div>
<div class="code" style="left:68.500px;top:7px"><span style="color:#008000;">//</span></div>
<div class="ln" style="left:0;top:26px;width:41.500px;color:#6e7681">15</div>
<div class="code" style="left:68.500px;top:26px"><span style="color:#267f99;">int32_t</span> <span style="color:#795e26;">read_temperature_mC</span><span style="color:#0431fa;">(</span><span style="color:#267f99;">uint8_t</span> <span style="color:#0000ff;">const</span> <span style="color:#3b3b3b;">*, </span><span style="color:#0000ff;">int</span><span style="color:#0431fa;">)</span> <span style="color:#0431fa;">{</span></div>
<div class="ln" style="left:0;top:45px;width:41.500px;color:#6e7681">16</div>
<div class="code" style="left:68.500px;top:45px">    <span style="color:#008000;">// Runs on a RP2040 microcontroller</span></div>
<div class="ln" style="left:0;top:64px;width:41.500px;color:#6e7681">17</div>
<div class="code" style="left:68.500px;top:64px">    <span style="color:#267f99;">uint8_t</span> <span style="color:#001080;">rxBuf</span><span style="color:#319331;">[</span><span style="color:#098658;">3</span><span style="color:#319331;">]</span><span style="color:#319331;">{}</span><span style="color:#3b3b3b;">;</span></div>
<div class="ln" style="left:0;top:83px;width:41.500px;color:#6e7681">18</div>
<div class="code" style="left:68.500px;top:83px">    <span style="color:#795e26;">spi_read_blocking</span><span style="color:#319331;">(</span><span style="color:#0000ff;">spi0</span><span style="color:#3b3b3b;">, </span><span style="color:#098658;">0x00</span><span style="color:#3b3b3b;">, </span><span style="color:#001080;">rxBuf</span><span style="color:#3b3b3b;">, </span><span style="color:#098658;">3</span><span style="color:#319331;">)</span><span style="color:#3b3b3b;">;</span></div>
<div class="ln" style="left:0;top:102px;width:41.500px;color:#6e7681">19</div>
<div class="ln" style="left:0;top:121px;width:41.500px;color:#6e7681">20</div>
<div class="code" style="left:68.500px;top:121px">    <span style="color:#008000;">// The expected crc could be calculated in hardware by using RP2040</span></div>
<div class="ln" style="left:0;top:140px;width:41.500px;color:#6e7681">21</div>
<div class="code" style="left:68.500px;top:140px">    <span style="color:#267f99;">uint8_t</span> <span style="color:#001080;">crc_expected</span><span style="color:#3b3b3b;"> = </span><span style="color:#795e26;">crc8</span><span style="color:#319331;">(</span><span style="color:#001080;">rxBuf</span><span style="color:#3b3b3b;">, </span><span style="color:#098658;">2</span><span style="color:#319331;">)</span><span style="color:#3b3b3b;">;</span></div>
<div class="ln" style="left:0;top:159px;width:41.500px;color:#6e7681">22</div>
<div class="code" style="left:68.500px;top:159px">    <span style="color:#267f99;">uint8_t</span> <span style="color:#001080;">crc_seen</span><span style="color:#3b3b3b;"> = </span><span style="color:#001080;">rxBuf</span><span style="color:#319331;">[</span><span style="color:#098658;">2</span><span style="color:#319331;">]</span><span style="color:#3b3b3b;">;</span></div>
<div class="ln" style="left:0;top:178px;width:41.500px;color:#6e7681">23</div>
<div class="ln" style="left:0;top:197px;width:41.500px;color:#6e7681">24</div>
<div class="code" style="left:68.500px;top:197px">    <span style="color:#af00db;">if</span> <span style="color:#319331;">(</span><span style="color:#001080;">crc_seen</span><span style="color:#3b3b3b;"> != </span><span style="color:#001080;">crc_expected</span><span style="color:#319331;">)</span> <span style="color:#319331;">{</span></div>
<div class="ln" style="left:0;top:216px;width:41.500px;color:#6e7681">25</div>
<div class="code" style="left:68.500px;top:216px">        <span style="color:#af00db;">return</span><span style="color:#3b3b3b;"> -</span><span style="color:#098658;">1</span><span style="color:#3b3b3b;">;</span></div>
<div class="ln" style="left:0;top:235px;width:41.500px;color:#6e7681">26</div>
<div class="code" style="left:68.500px;top:235px">    <span style="color:#319331;">}</span></div>
<div class="ln" style="left:0;top:254px;width:41.500px;color:#171184">27</div>
<div class="code" style="left:68.500px;top:254px">    <span style="color:#af00db;">return</span> <span style="color:#319331;">(</span><span style="color:#001080;">rxBuf</span><span style="color:#7b3814;">[</span><span style="color:#098658;">1</span><span style="color:#7b3814;">]</span><span style="color:#3b3b3b;"> &lt;&lt; </span><span style="color:#098658;">0</span><span style="color:#319331;">)</span><span style="color:#3b3b3b;"> | </span><span style="color:#319331;">(</span><span style="color:#001080;">rxBuf</span><span style="color:#7b3814;">[</span><span style="color:#098658;">0</span><span style="color:#7b3814;">]</span><span style="color:#3b3b3b;"> &lt;&lt; </span><span style="color:#098658;">8</span><span style="color:#319331;">)</span><span style="color:#3b3b3b;">;</span></div>
<div class="ln" style="left:0;top:273px;width:41.500px;color:#6e7681">28</div>
<div class="code" style="left:68.500px;top:273px"><span style="color:#0431fa;">}</span></div>
<div class="ln" style="left:0;top:292px;width:41.500px;color:#6e7681">29</div>
<div class="abs" style="left:428px;top:253px;width:2px;height:19px;background:#000"></div>
<div class="abs" style="left:47.500px;top:44px;width:3px;height:19px;background:repeating-linear-gradient(135deg,#2090d3 0 1px,#fff 1px 2.500px)"></div>
<svg class="abs" style="left:3px;top:257px" width="13" height="12" viewBox="0 0 13 12"><path d="M1.700.8h6.300l3.900 5.200-3.900 5.200H1.700a1 1 0 0 1-1-1V1.800a1 1 0 0 1 1-1z" fill="#fff" stroke="#d18b00" stroke-width="1.200" stroke-linejoin="round"/><circle cx="5.400" cy="6" r="2" fill="#e51400"/></svg>
<div class="abs" style="left:594px;top:0;width:1px;height:301px;background:#ececec"></div>
<div class="abs" style="left:595px;top:113px;width:15px;height:2px;background:#4a4a1a"></div>
<div class="abs" style="left:595px;top:115px;width:15px;height:3px;background:#ffffa8"></div>
<div class="abs" style="left:595px;top:63px;width:4px;height:6px;background:#66a1e2"></div>
</div>
<div class="abs" style="left:0;top:58px;width:610px;height:3px;background:linear-gradient(#e4e4e4,rgba(255,255,255,0))"></div>
<div class="tabbar"></div>
<div class="abs" style="left:-1px;top:0;width:119px;height:35px;background:#fff;border-right:1px solid #e5e5e5;border-top:1px solid #005fb8"></div>
<svg class="abs" style="left:13px;top:13px" width="13" height="10" viewBox="0 0 13 10" fill="none" stroke="#4a7fb0"><path d="M7.200 2.300A3.700 3.700 0 1 0 7.200 7.700" stroke-width="2"/><path d="M8.300 5h4.200M10.400 2.900v4.200" stroke-width="1.200"/></svg>
<div id="t2" class="t" style="left:31px;top:11.500px;font-size:13px;color:#895503;letter-spacing:-.14px">spi.cpp</div>
<div class="t" style="left:79px;top:11.500px;font-size:13px;color:#895503">M</div>
<svg class="abs" style="left:99.500px;top:13.500px" width="9" height="9" viewBox="0 0 9 9" stroke="#1f1f1f" stroke-width="1.100"><path d="M.5.5l8 8M8.500.5l-8 8"/></svg>
<div id="d1" class="t" style="left:15.5px;top:40.500px;font-size:13px;color:#616161;letter-spacing:-0.2px">example</div>
<svg class="abs" style="left:68.5px;top:42px" width="7" height="11" viewBox="0 0 7 11" fill="none" stroke="#616161" stroke-width="1"><path d="M.7.7 6 5.500.7 10.300"/></svg>
<div id="d2" class="t" style="left:80.5px;top:40.500px;font-size:13px;color:#616161;letter-spacing:0px">endpoint_spi</div>
<svg class="abs" style="left:159px;top:42px" width="7" height="11" viewBox="0 0 7 11" fill="none" stroke="#616161" stroke-width="1"><path d="M.7.7 6 5.500.7 10.300"/></svg>
<svg class="abs" style="left:174.5px;top:42.5px" width="13" height="10" viewBox="0 0 13 10" fill="none" stroke="#4a7fb0"><path d="M7.200 2.300A3.700 3.700 0 1 0 7.200 7.700" stroke-width="2"/><path d="M8.300 5h4.200M10.400 2.900v4.200" stroke-width="1.200"/></svg>
<div id="d3" class="t" style="left:192.5px;top:40.500px;font-size:13px;color:#616161;letter-spacing:-0.09px">spi.cpp</div>
<svg class="abs" style="left:239px;top:42px" width="7" height="11" viewBox="0 0 7 11" fill="none" stroke="#616161" stroke-width="1"><path d="M.7.7 6 5.500.7 10.300"/></svg>
<svg class="abs" style="left:251.5px;top:40px" width="13" height="14" viewBox="0 0 13 14" fill="none" stroke="#652d90" stroke-width="1.100" stroke-linejoin="round"><path d="M6.500.7 12.300 3.600v6.800L6.500 13.300.7 10.400V3.600zM.7 3.600l5.800 2.900 5.800-2.900M6.500 6.500v6.800"/></svg>
<div id="d4" class="t" style="left:269px;top:40.500px;font-size:13px;color:#616161;letter-spacing:-0.124px">read_temperature_mC(uint8_t const *, int)</div>
<svg class="abs" style="left:433px;top:9px" width="17" height="18" viewBox="0 0 17 18" fill="none" stroke="#3b3b3b" stroke-width="1.100" stroke-linejoin="round"><path d="M5.500 7.500V1.200l10.400 6.300-6.300 3.700"/><ellipse cx="4.800" cy="13.200" rx="2.300" ry="3"/><path d="M3 10.700 2 9.500M6.600 10.700l1-1.200M2.500 13.200H.6M7.100 13.200H9M3 15.500l-1.300 1.300M6.600 15.500l1.300 1.300" stroke-width=".9"/></svg>
<svg class="abs" style="left:454.500px;top:15.500px" width="8" height="5" viewBox="0 0 8 5" fill="none" stroke="#3b3b3b" stroke-width="1"><path d="M.5.5 4 4 7.500.5"/></svg>
<svg class="abs" style="left:474.200px;top:11.200px" width="13.600" height="13.600" viewBox="0 0 24 24" fill="none" stroke="#3b3b3b" stroke-width="1.800" stroke-linejoin="round"><path d="M10.200 1h3.600l.6 3.200 2 .9 2.700-1.800 2.500 2.500-1.800 2.700.9 2 3.200.6v3.600l-3.200.6-.9 2 1.800 2.700-2.500 2.500-2.700-1.800-2 .9-.6 3.200h-3.600l-.6-3.200-2-.9-2.700 1.800-2.500-2.500 1.800-2.700-.9-2-3.200-.6V10.200l3.200-.6.900-2L4.400 4.900l2.500-2.500 2.700 1.800 2-.9z"/><circle cx="12" cy="12" r="3.200"/></svg>
<svg class="abs" style="left:499px;top:9.500px" width="14" height="16" viewBox="0 0 14 16" fill="none" stroke="#3b3b3b" stroke-width="1.100"><path d="M7 .5v6.500M4.500 4.700 7 7.200l2.500-2.500"/><path d="M.7 8.500v6.500h12.600V8.500"/><path d="M7 9.300v1.200M4.500 11.300v1.200M9.500 11.300v1.200M2.800 13.200v1M7 13.200v1M11.200 13.200v1" stroke-width="1.200"/></svg>
<svg class="abs" style="left:525px;top:10px" width="16" height="16" viewBox="0 0 16 16" fill="none" stroke="#3b3b3b" stroke-width="1.100"><circle cx="3.200" cy="3" r="2"/><circle cx="12.800" cy="13" r="2"/><path d="M3.200 5v5.500a2.300 2.300 0 0 0 2.300 2.300h3M6.800 10.800l2 2-2 2"/><path d="M12.800 11V5.500a2.300 2.300 0 0 0-2.300-2.300h-3M9.200 1.200l-2 2 2 2"/></svg>
<svg class="abs" style="left:552px;top:11px" width="14" height="14" viewBox="0 0 14 14" fill="none" stroke="#3b3b3b" stroke-width="1.100"><rect x=".6" y=".6" width="12.800" height="12.800" rx="1"/><path d="M7 .6v12.800"/></svg>
<svg class="abs" style="left:578.500px;top:17px" width="13" height="3" viewBox="0 0 13 3" fill="#3b3b3b"><circle cx="1.500" cy="1.500" r="1.100"/><circle cx="6.500" cy="1.500" r="1.100"/><circle cx="11.500" cy="1.500" r="1.100"/></svg>
</div>
<!-- EDITOR 3 -->
<div id="ed3" class="abs"><div class="tabbar" style="height:34px"></div></div>
<div class="abs" style="left:253px;top:524px;width:151px;height:34px;background:#fff;border-right:1px solid #e5e5e5"></div>
<svg class="abs" style="left:271px;top:537px" width="9" height="9" viewBox="0 0 9 9" stroke="#b0b0b0" stroke-width="1"><path d="M0 .5h9M0 3.200h6.500M0 5.900h9M0 8.500h6.500"/></svg>
<div id="sb" class="t" style="left:285.500px;top:535px;font-size:13px;color:#616161;letter-spacing:-.12px">Simple Browser</div>
<svg class="abs" style="left:385px;top:537px" width="9" height="9" viewBox="0 0 9 9" stroke="#7a7a7a" stroke-width="1"><path d="M.5.5l8 8M8.500.5l-8 8"/></svg>
<div class="abs" style="left:1412px;top:530px;width:22px;height:22px;border-radius:5px;background:#dedede"></div>
<svg class="abs" style="left:1417.500px;top:534px" width="11" height="14" viewBox="0 0 11 14" fill="none" stroke="#3b3b3b" stroke-width="1.100"><rect x=".6" y="5.800" width="9.800" height="7.500" rx="1"/><path d="M2.600 5.800V3.800a2.900 2.900 0 0 1 5.800 0v2"/></svg>
<svg class="abs" style="left:1442.500px;top:540px" width="13" height="3" viewBox="0 0 13 3" fill="#3b3b3b"><circle cx="1.500" cy="1.500" r="1.100"/><circle cx="6.500" cy="1.500" r="1.100"/><circle cx="11.500" cy="1.500" r="1.100"/></svg>
<svg class="abs" style="left:271px;top:569.500px" width="12" height="10" viewBox="0 0 12 10" fill="none" stroke="#3b3b3b" stroke-width="1.100" stroke-linejoin="round"><path d="M12 5H.8M5 .6.8 5 5 9.400"/></svg>
<svg class="abs" style="left:297px;top:569.500px" width="12" height="10" viewBox="0 0 12 10" fill="none" stroke="#3b3b3b" stroke-width="1.100" stroke-linejoin="round"><path d="M0 5h11.200M7 .6 11.200 5 7 9.400"/></svg>
<svg class="abs" style="left:322px;top:567.500px" width="13" height="13" viewBox="0 0 13 13" fill="none" stroke="#3b3b3b" stroke-width="1.100"><path d="M3.300 2.600A5.300 5.300 0 1 0 6.500 1.500"/><path d="M3.300 .2v2.600h2.600" stroke-linejoin="round"/></svg>
<div id="sburl" class="t" style="left:348.500px;top:568.500px;font-size:13px;color:#3b3b3b;letter-spacing:.05px">https://ep.embeff.com/42e5613db03640c4aa1468abd8a42e91/logic/?path=42e5613db03640c4aa1468abd8a42e91/logic/websockify</div>
<svg class="abs" style="left:1437px;top:567px" width="14" height="14" viewBox="0 0 14 14" fill="none" stroke="#3b3b3b" stroke-width="1.100"><path d="M6 .6H.6v12.800h12.800V8"/><path d="M8.500.6h4.900v4.900M13.400.6 6.500 7.500"/></svg>
<div class="abs" style="left:253px;top:590px;width:1219px;height:268px;background:#1b1b1b"></div>
<div class="abs" style="left:253px;top:590px;width:11px;height:268px;background:#262626"></div>
<div class="abs" style="left:264px;top:590px;width:1180px;height:24.700px;background:#f2f1f0"></div>
<div id="m1" class="t" style="left:270.5px;top:595.500px;font-size:14px;color:#3b3b3b">File</div>
<div id="m2" class="t" style="left:305px;top:595.500px;font-size:14px;color:#3b3b3b">Edit</div>
<div id="m3" class="t" style="left:342.5px;top:595.500px;font-size:14px;color:#3b3b3b">Capture</div>
<div id="m4" class="t" style="left:405.5px;top:595.500px;font-size:14px;color:#3b3b3b">Measure</div>
<div id="m5" class="t" style="left:472px;top:595.500px;font-size:14px;color:#3b3b3b">View</div>
<div id="m6" class="t" style="left:516.5px;top:595.500px;font-size:14px;color:#3b3b3b">Help</div>
<div class="abs" style="left:1444px;top:590px;width:11px;height:268px;background:#262626"></div>
<div class="abs" style="left:1455px;top:590px;width:17px;height:268px;background:#1f1f1f"></div>
<div class="abs" style="left:1455px;top:607px;width:17px;height:93px;background:#7a7a7c"></div>
<svg class="abs" style="left:1459px;top:594px" width="9" height="6" viewBox="0 0 9 6" fill="none" stroke="#666" stroke-width="1.600"><path d="M.6 5.400 4.500 1.500 8.400 5.400"/></svg>
<svg class="abs" style="left:1459px;top:847px" width="9" height="6" viewBox="0 0 9 6" fill="none" stroke="#8a8a8a" stroke-width="1.600"><path d="M.6.6 4.500 4.500 8.400.6"/></svg>
<div class="abs" style="left:264px;top:642px;width:1123px;height:1px;background:#3c3c3c"></div>
<div class="abs" style="left:264px;top:687px;width:1123px;height:1px;background:#454545"></div>
<div class="abs" style="left:264px;top:750px;width:1123px;height:1px;background:#454545"></div>
<div class="abs" style="left:264px;top:813.5px;width:1123px;height:1px;background:#454545"></div>
<div class="abs" style="left:425px;top:642px;width:1px;height:216px;background:#4a4a4a"></div>
<div class="abs" style="left:1386px;top:615px;width:1px;height:244px;background:#5a5a5a"></div>
<div class="abs" style="left:264px;top:643px;width:4.500px;height:44px;background:#b5866c"></div>
<div class="abs" style="left:264px;top:688px;width:4.500px;height:62px;background:#f0607c"></div>
<div class="abs" style="left:264px;top:751px;width:4.500px;height:62.5px;background:#f0a040"></div>
<div class="abs" style="left:264px;top:814.5px;width:4.500px;height:44px;background:#e6d42a"></div>
<div class="t" style="left:273px;top:659.8px;font-size:10.500px;color:#a87c64;transform-origin:0 50%;transform:scaleX(.85)">D1</div>
<div id="ch1" class="t" style="left:297.500px;top:659.5px;font-size:11px;color:#e2e2e2;letter-spacing:.03px">SPI0.SCK</div>
<div class="t" style="left:273px;top:704.8px;font-size:10.500px;color:#d55068;transform-origin:0 50%;transform:scaleX(.85)">D2</div>
<div id="ch2" class="t" style="left:297.500px;top:704.5px;font-size:11px;color:#e2e2e2;letter-spacing:.03px">SPI0.MOSI</div>
<div class="t" style="left:273px;top:768.3px;font-size:10.500px;color:#e09a3e;transform-origin:0 50%;transform:scaleX(.85)">D3</div>
<div id="ch3" class="t" style="left:297.500px;top:768.0px;font-size:11px;color:#e2e2e2;letter-spacing:.03px">SPI0.MISO</div>
<div class="t" style="left:273px;top:831.3px;font-size:10.500px;color:#d8c828;transform-origin:0 50%;transform:scaleX(.85)">D4</div>
<div id="ch4" class="t" style="left:297.500px;top:831.0px;font-size:11px;color:#e2e2e2;letter-spacing:.03px">SPI0.nCS0</div>
<div class="abs" style="left:297px;top:730.3px;width:7px;height:6px;border-radius:2px;background:#7b9ef7"></div>
<div class="t" style="left:309px;top:727.8px;font-size:10.500px;color:#e6e6e6;transform-origin:0 50%;transform:scaleX(.815)">SPI0 - MOSI</div>
<div class="abs" style="left:297px;top:793.3px;width:7px;height:6px;border-radius:2px;background:#7b9ef7"></div>
<div class="t" style="left:309px;top:790.8px;font-size:10.500px;color:#e6e6e6;transform-origin:0 50%;transform:scaleX(.815)">SPI0 - MISO</div>
<svg class="abs" style="left:411px;top:624px" width="6" height="10" viewBox="0 0 6 10" fill="none" stroke="#5c5c5c" stroke-width="1.600"><path d="M5.200.8 1 5l4.200 4.200"/></svg>
<div class="t" style="left:431.500px;top:646.8px;font-size:7.500px;color:#fff;font-weight:bold">H</div>
<div class="t" style="left:432px;top:675.0px;font-size:7.500px;color:#fff;font-weight:bold">L</div>
<div class="t" style="left:431.500px;top:709.8px;font-size:7.500px;color:#fff;font-weight:bold">H</div>
<div class="t" style="left:432px;top:738.5px;font-size:7.500px;color:#fff;font-weight:bold">L</div>
<div class="t" style="left:431.500px;top:772.3px;font-size:7.500px;color:#fff;font-weight:bold">H</div>
<div class="t" style="left:432px;top:801.5px;font-size:7.500px;color:#fff;font-weight:bold">L</div>
<div class="t" style="left:431.500px;top:817.8px;font-size:7.500px;color:#fff;font-weight:bold">H</div>
<div class="t" style="left:432px;top:845.5px;font-size:7.500px;color:#fff;font-weight:bold">L</div>
<svg class="abs" style="left:0;top:0" width="1474" height="882" viewBox="0 0 1474 882" fill="none" stroke-width="1.200"><path d="M786.5 642V858" stroke="#555" stroke-width="1" stroke-dasharray="3 2.500"/><path d="M1026.5 642V858" stroke="#555" stroke-width="1" stroke-dasharray="3 2.500"/><path d="M1266.5 642V858" stroke="#555" stroke-width="1" stroke-dasharray="3 2.500"/><path d="M425.500 678.4H546.3V650.6H558.5V678.4H570.3V650.6H582.5V678.4H594.3V650.6H606.5V678.4H618.3V650.6H630.5V678.4H642.3V650.6H654.5V678.4H666.3V650.6H678.5V678.4H690.3V650.6H702.5V678.4H714.3V650.6H726.5V678.4H774.4V650.6H786.6V678.4H798.4V650.6H810.6V678.4H822.4V650.6H834.6V678.4H846.4V650.6H858.6V678.4H870.4V650.6H882.6V678.4H894.4V650.6H906.6V678.4H918.4V650.6H930.6V678.4H942.4V650.6H954.6V678.4H1002.2V650.6H1014.4V678.4H1026.2V650.6H1038.4V678.4H1050.2V650.6H1062.4V678.4H1074.2V650.6H1086.4V678.4H1098.2V650.6H1110.4V678.4H1122.2V650.6H1134.4V678.4H1146.2V650.6H1158.4V678.4H1170.2V650.6H1182.4V678.4H1386.500" stroke="#c28e6e"/><path d="M546.3 659.800l4.200 8.200h-8.400zM570.3 659.800l4.200 8.200h-8.400zM594.3 659.800l4.200 8.200h-8.400zM618.3 659.800l4.200 8.200h-8.400zM642.3 659.800l4.200 8.200h-8.400zM666.3 659.800l4.200 8.200h-8.400zM690.3 659.800l4.200 8.200h-8.400zM714.3 659.800l4.200 8.200h-8.400zM774.4 659.800l4.200 8.200h-8.400zM798.4 659.800l4.200 8.200h-8.400zM822.4 659.800l4.200 8.200h-8.400zM846.4 659.800l4.200 8.200h-8.400zM870.4 659.800l4.200 8.200h-8.400zM894.4 659.800l4.200 8.200h-8.400zM918.4 659.800l4.200 8.200h-8.400zM942.4 659.800l4.200 8.200h-8.400zM1002.2 659.800l4.200 8.200h-8.400zM1026.2 659.800l4.200 8.200h-8.400zM1050.2 659.800l4.200 8.200h-8.400zM1074.2 659.800l4.200 8.200h-8.400zM1098.2 659.800l4.200 8.200h-8.400zM1122.2 659.800l4.200 8.200h-8.400zM1146.2 659.800l4.200 8.200h-8.400zM1170.2 659.800l4.200 8.200h-8.400z" fill="#c28e6e" stroke="none"/><path d="M425.500 741.800H1386.500" stroke="#ea5f7a" stroke-width="1.300"/><rect x="546.6" y="692.300" width="180.200" height="13.500" fill="#7b9ef7" stroke="none"/><rect x="546.6" y="755.300" width="180.200" height="13.500" fill="#7b9ef7" stroke="none"/><rect x="774.7" y="692.300" width="180.200" height="13.500" fill="#7b9ef7" stroke="none"/><rect x="774.7" y="755.300" width="180.200" height="13.500" fill="#7b9ef7" stroke="none"/><rect x="1002.5" y="692.300" width="180.200" height="13.500" fill="#7b9ef7" stroke="none"/><rect x="1002.5" y="755.300" width="180.200" height="13.500" fill="#7b9ef7" stroke="none"/><path d="M425.500 804.6H558.6V776.4H582.6V804.6H630.6V776.4H702.6V804.6H810.7V776.4H834.7V804.6H1014.5V776.4H1062.5V804.6H1086.5V776.4H1134.5V804.6H1158.5V776.4H1170.5V804.6H1386.500" stroke="#f0a040"/><path d="M425.500 821.6H522.400V849.6H738.500V821.6H750.400V849.6H966.400V821.6H978.600V849.6H1194.500V821.6H1386.500" stroke="#e6d42a"/><path d="M546.300 652V858" stroke="#ffe55c" stroke-width="1" stroke-dasharray="3 2"/><rect x="539.300" y="629.300" width="14" height="13.300" fill="#101010" stroke="none"/><path d="M538.800 643.200h15.100l-7.550 9.300z" fill="#ffe55c" stroke="none"/></svg>
<div class="t" style="left:606.6px;top:693.500px;width:60px;text-align:center;font-size:11.500px;color:#111">0x00</div>
<div class="t" style="left:606.6px;top:756.500px;width:60px;text-align:center;font-size:11.500px;color:#111">0x4E</div>
<div class="t" style="left:834.7px;top:693.500px;width:60px;text-align:center;font-size:11.500px;color:#111">0x00</div>
<div class="t" style="left:834.7px;top:756.500px;width:60px;text-align:center;font-size:11.500px;color:#111">0x20</div>
<div class="t" style="left:1062.5px;top:693.500px;width:60px;text-align:center;font-size:11.500px;color:#111">0x00</div>
<div class="t" style="left:1062.5px;top:756.500px;width:60px;text-align:center;font-size:11.500px;color:#111">0x6D</div>
<div class="t" style="left:546.500px;top:619px;font-size:9.500px;font-weight:bold;color:#fff">0 s</div>
<div class="t" style="left:542.900px;top:628.700px;font-size:9.500px;font-weight:bold;color:#e8cf4a">T</div>
<div class="t" style="left:784px;top:629.700px;font-size:10px;font-weight:bold;color:#fff;letter-spacing:-.05px">+0.1 ms</div>
<div class="t" style="left:1024px;top:629.700px;font-size:10px;font-weight:bold;color:#fff;letter-spacing:-.05px">+0.2 ms</div>
<div class="t" style="left:1264px;top:629.700px;font-size:10px;font-weight:bold;color:#fff;letter-spacing:-.05px">+0.3 ms</div>
<div class="abs" style="left:1397.700px;top:629px;width:36px;height:36px;border-radius:18px;background:#0d9c4f"></div>
<svg class="abs" style="left:1410.300px;top:640px" width="12" height="14" viewBox="0 0 12 14"><path d="M.8 1.300v11.400a.6.600 0 0 0 .9.500l9.400-5.700a.6.600 0 0 0 0-1L1.700.8a.6.600 0 0 0-.9.500z" fill="#fff"/></svg>
<div class="abs" style="left:1399px;top:677px;width:35px;height:1px;background:#4a4a4a"></div>
<svg class="abs" style="left:1402px;top:692px" width="28" height="18" viewBox="0 0 28 18" fill="none" stroke="#8c8c8c" stroke-width="1.500"><rect x="1" y="1" width="26" height="16" rx="5"/><path d="M1 12.500h26"/></svg>
<svg class="abs" style="left:1405px;top:741px" width="22" height="18" viewBox="0 0 22 18" fill="none" stroke="#8c8c8c" stroke-width="1.500" stroke-linejoin="round"><path d="M5.500 1h11L21 9l-4.500 8h-11L1 9z"/></svg>
<div class="t" style="left:1410px;top:745px;font-size:9.500px;font-weight:bold;color:#8c8c8c">1F</div>
<svg class="abs" style="left:1406px;top:790px" width="20" height="18" viewBox="0 0 20 18" fill="none" stroke="#8c8c8c" stroke-width="1.300" stroke-linejoin="round"><path d="M1 12.200 16 1.500l3 4.300L4 16.500z"/><path d="M3.500 10.800l1.200 1.600M6 9l1.200 1.600M8.500 7.200l1.200 1.600M11 5.400l1.200 1.600M13.500 3.600l1.200 1.600" stroke-width="1"/></svg>
<svg class="abs" style="left:1407px;top:838px" width="19" height="19" viewBox="0 0 19 19" fill="none" stroke="#8c8c8c" stroke-width="1.500"><rect x="1" y="1" width="6.500" height="6.500"/><path d="M4.500 11h13v7.500h-13zM11 4.500h6.500V11M11 4.500V18.500"/></svg>
<!-- STATUS -->
<div id="status" class="abs"></div>
<div class="abs" style="left:2px;top:859px;width:34px;height:21px;background:#005fb8"></div>
<svg class="abs" style="left:14px;top:863px" width="11" height="13" viewBox="0 0 11 13" fill="none" stroke="#fff" stroke-width="1.100"><path d="M.6 4.300 4.600 8.300.6 12.300M10 .6 6 4.600l4 4"/></svg>
<svg class="abs" style="left:43px;top:862.500px" width="11" height="14" viewBox="0 0 11 14" fill="none" stroke="#1a1a1a" stroke-width="1.100"><circle cx="2.800" cy="2.500" r="1.700"/><circle cx="2.800" cy="11.500" r="1.700"/><circle cx="8.500" cy="5" r="1.700"/><path d="M2.800 4.200v5.600M8.500 6.700c0 2-2.500 2.400-5.200 2.900"/></svg>
<div id="s1" class="t" style="left:59.7px;top:863.500px;font-size:12px;color:#1a1a1a;letter-spacing:-0.106px">master*</div>
<svg class="abs" style="left:107px;top:864.500px" width="13" height="10" viewBox="0 0 13 10" fill="none" stroke="#1a1a1a" stroke-width="1.100"><path d="M4 8.700H3.200a2.600 2.600 0 0 1-.3-5.200 3.700 3.700 0 0 1 7.200 0 2.600 2.600 0 0 1-.3 5.200H9"/><path d="M6.500 9.700V4.800M4.600 6.500l1.900-1.900 1.900 1.900"/></svg>
<svg class="abs" style="left:137px;top:862.500px" width="8" height="14" viewBox="0 0 8 14" fill="none" stroke="#1a1a1a" stroke-width="1.100"><path d="M2.300.3v3M5.700.3v3M.8 3.500h6.400v3.300a3.200 3.200 0 0 1-6.400 0zM4 10v3.500"/></svg>
<div id="s2" class="t" style="left:151.4px;top:863.500px;font-size:12px;color:#1a1a1a;letter-spacing:-0.42px">RC Port: 3711</div>
<svg class="abs" style="left:238px;top:863.500px" width="12" height="12" viewBox="0 0 12 12" fill="none" stroke="#1a1a1a" stroke-width="1"><circle cx="6" cy="6" r="5.400"/><path d="M3.800 3.800l4.400 4.400M8.200 3.800 3.800 8.200"/></svg>
<div id="s3" class="t" style="left:254px;top:863.500px;font-size:12px;color:#1a1a1a;letter-spacing:0px">0</div>
<svg class="abs" style="left:263.500px;top:863.500px" width="13" height="12" viewBox="0 0 13 12" fill="none" stroke="#1a1a1a" stroke-width="1" stroke-linejoin="round"><path d="M6.500.8 12.300 11.200H.7z"/><path d="M6.500 4.300v3.700M6.500 9v1.200"/></svg>
<div id="s4" class="t" style="left:279.8px;top:863.500px;font-size:12px;color:#1a1a1a;letter-spacing:0px">2</div>
<svg class="abs" style="left:303.500px;top:863px" width="13" height="13" viewBox="0 0 13 13" fill="none" stroke="#1a1a1a" stroke-width="1"><path d="M6.500 4.500 4 12.500M6.500 4.500 9 12.500M4.800 10h3.400"/><circle cx="6.500" cy="4" r="1" fill="#1a1a1a"/><path d="M3.800 1.500a3.800 3.800 0 0 0 0 5.200M9.200 1.500a3.800 3.800 0 0 1 0 5.200M1.800 .3a6 6 0 0 0 0 7.700M11.200.3a6 6 0 0 1 0 7.700"/></svg>
<div id="s5" class="t" style="left:319px;top:863.500px;font-size:12px;color:#1a1a1a;letter-spacing:0px">0</div>
<svg class="abs" style="left:341px;top:862.500px" width="14" height="14" viewBox="0 0 14 14" fill="none" stroke="#1a1a1a" stroke-width="1" stroke-linejoin="round"><path d="M4.500 5.500V1l8.700 5.300-5.400 3.200"/><ellipse cx="4" cy="10" rx="1.900" ry="2.500"/><path d="M2.500 7.900 1.700 7M5.500 7.900l.8-.9M2.100 10H.5M5.900 10h1.600M2.500 12l-1 1M5.500 12l1 1" stroke-width=".8"/></svg>
<div id="s6" class="t" style="left:358.5px;top:863.500px;font-size:12px;color:#1a1a1a;letter-spacing:-0.046px">Debug on ExecutionPlatform (workspace)</div>
<svg class="abs" style="left:595px;top:863.500px" width="12" height="12" viewBox="0 0 24 24" fill="none" stroke="#1a1a1a" stroke-width="2" stroke-linejoin="round"><path d="M10.200 1h3.600l.6 3.200 2 .9 2.700-1.800 2.500 2.500-1.800 2.700.9 2 3.200.6v3.600l-3.200.6-.9 2 1.800 2.700-2.500 2.500-2.700-1.800-2 .9-.6 3.200h-3.600l-.6-3.200-2-.9-2.700 1.800-2.500-2.500 1.800-2.700-.9-2-3.200-.6V10.200l3.200-.6.900-2L4.400 4.900l2.500-2.500 2.700 1.800 2-.9z"/><circle cx="12" cy="12" r="3.400"/></svg>
<div id="s7" class="t" style="left:611.7px;top:863.500px;font-size:12px;color:#1a1a1a;letter-spacing:0.062px">Build</div>
<div id="s8" class="t" style="left:1056.2px;top:863.500px;font-size:12px;color:#1a1a1a;letter-spacing:-0.276px">Ln 27, Col 46</div>
<div id="s9" class="t" style="left:1139.5px;top:863.500px;font-size:12px;color:#1a1a1a;letter-spacing:-0.553px">Spaces: 4</div>
<div id="s10" class="t" style="left:1203.4px;top:863.500px;font-size:12px;color:#1a1a1a;letter-spacing:-0.48px">UTF-8</div>
<div id="s11" class="t" style="left:1250px;top:863.500px;font-size:12px;color:#1a1a1a;letter-spacing:-0.658px">LF</div>
<div id="s12" class="t" style="left:1277.5px;top:863.500px;font-size:12px;color:#1a1a1a;letter-spacing:2.092px">{}</div>
<div id="s13" class="t" style="left:1296.8px;top:863.500px;font-size:12px;color:#1a1a1a;letter-spacing:-0.163px">C++</div>
<div id="s14" class="t" style="left:1334.5px;top:863.500px;font-size:12px;color:#1a1a1a;letter-spacing:-0.277px">Layout: US</div>
<div id="s15" class="t" style="left:1406.6px;top:863.500px;font-size:12px;color:#1a1a1a;letter-spacing:-0.091px">arm</div>
<svg class="abs" style="left:1444.500px;top:863px" width="12" height="13" viewBox="0 0 12 13" fill="none" stroke="#1a1a1a" stroke-width="1"><path d="M6 .8a3.800 3.800 0 0 0-3.800 3.800v3.200L.9 10h10.200L9.800 7.800V4.600A3.800 3.800 0 0 0 6 .8z" stroke-linejoin="round"/><path d="M4.800 10.300a1.300 1.300 0 0 0 2.400 0"/></svg>
<!-- EDGES -->
<div class="abs" style="left:0;top:0;width:2px;height:882px;background:#6e6e6e"></div>
<div class="abs" style="left:0;top:0;width:2px;height:68px;background:#5c5c5c"></div>
<div class="abs" style="left:0;top:68px;width:2px;height:35px;background:#9a5a1a"></div>
<div class="abs" style="left:0;top:880px;width:224px;height:2px;background:#787878"></div>
<div class="abs" style="left:224px;top:880px;width:1250px;height:2px;background:#2a2a2a"></div>
<div class="abs" style="left:1472px;top:0;width:2px;height:882px;background:#151515"></div>
</div></body></html>
